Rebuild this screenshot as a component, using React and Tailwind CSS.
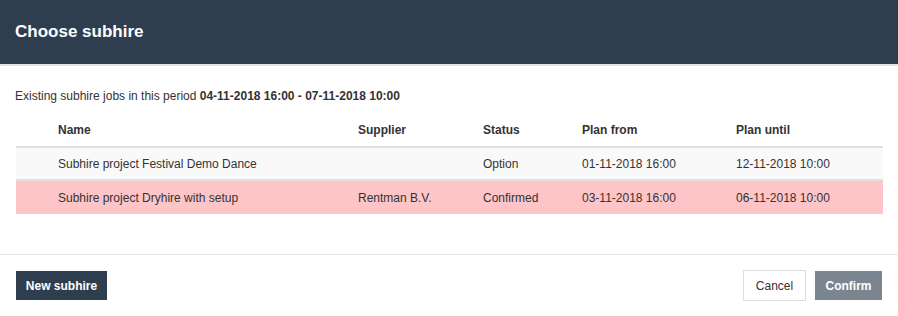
import React from 'react';

const rows = [
  { name: 'Subhire project Festival Demo Dance', supplier: '', status: 'Option', from: '01-11-2018 16:00', until: '12-11-2018 10:00', bg: 'bg-[#f9f9f9]' },
  { name: 'Subhire project Dryhire with setup', supplier: 'Rentman B.V.', status: 'Confirmed', from: '03-11-2018 16:00', until: '06-11-2018 10:00', bg: 'bg-[#fdc5c7]' },
];

const cols = 'grid grid-cols-[42px_300px_125px_99px_154px_1fr]';

export default function App() {
  return (
    <div className="w-[898px] h-[316px] bg-white font-['Liberation_Sans',Arial,sans-serif] text-[12px] text-[#333]">
      <div className="h-[64px] bg-[#2f3e4f] flex items-center px-[15px] border-b-2 border-[#e4e4e4] box-content">
        <h3 className="text-[17px] font-bold text-white">Choose subhire</h3>
      </div>

      <div className="px-4 pt-[21px] h-[189px] border-b border-[#e5e5e5]">
        <p className="-ml-px">
          Existing subhire jobs in this period <b>04-11-2018 16:00 - 07-11-2018 10:00</b>
        </p>

        <div className="mt-[8px] w-[867px]">
          <div className={`${cols} h-[35px] items-center font-bold border-b-2 border-[#e0e0e0]`}>
            <div />
            <div>Name</div>
            <div>Supplier</div>
            <div>Status</div>
            <div>Plan from</div>
            <div>Plan until</div>
          </div>
          {rows.map((r, i) => (
            <div key={i} className={`${cols} h-[33px] items-center ${r.bg} ${i === 0 ? 'border-b-2 border-[#e0e0e0]' : ''}`}>
              <div />
              <div>{r.name}</div>
              <div>{r.supplier}</div>
              <div>{r.status}</div>
              <div>{r.from}</div>
              <div>{r.until}</div>
            </div>
          ))}
        </div>
      </div>

      <div className="flex items-center justify-between px-4 pt-[15px]">
        <button className="h-[29px] w-[91px] bg-[#2f3e4f] text-white font-bold">New subhire</button>
        <div className="flex gap-[9px]">
          <button className="h-[31px] w-[63px] border border-[#ddd] bg-white text-[#333]">Cancel</button>
          <button className="h-[29px] w-[67px] mt-px bg-[#7b858f] text-white font-bold">Confirm</button>
        </div>
      </div>
    </div>
  );
}
